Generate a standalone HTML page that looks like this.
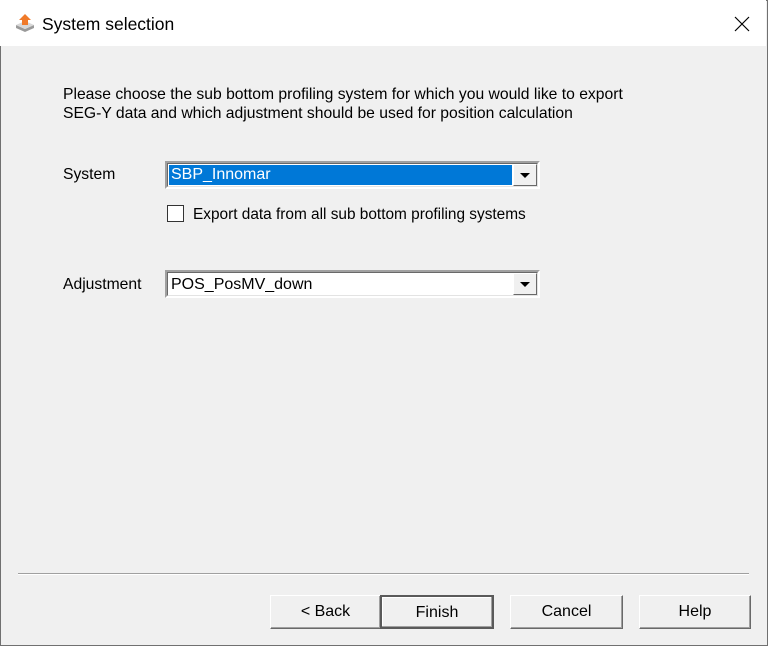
<!DOCTYPE html>
<html><head><style>
*{box-sizing:border-box;margin:0;padding:0}
body{width:768px;height:646px;background:#f0f0f0;font-family:"Liberation Sans",sans-serif;font-size:15.7px;color:#000;position:relative;overflow:hidden}
.win{position:absolute;left:0;top:0;width:768px;height:646px;border:1px solid #707070}
.title{position:absolute;left:0;top:0;width:766px;height:46px;background:#fff}
.t{position:absolute;white-space:nowrap}
.combo{position:absolute;left:165px;width:375px;height:28px;border:2px solid;border-color:#a0a0a0 #fff #fff #a0a0a0;background:#fff}
.combo .in{position:absolute;left:0;top:0;right:0;bottom:0;border:1px solid;border-color:#696969 #e3e3e3 #e3e3e3 #696969}
.dd{position:absolute;right:1px;top:1px;width:24px;height:22px;background:#f0f0f0;border:1px solid;border-color:#fff #696969 #696969 #fff}
.dd:after{content:"";position:absolute;left:6px;top:8px;border-left:5px solid transparent;border-right:5px solid transparent;border-top:5px solid #000}
.btn{position:absolute;top:595px;height:34px;border:1px solid;border-color:#fff #696969 #696969 #fff;box-shadow:inset -1px -1px 0 #a0a0a0;background:#f0f0f0;text-align:center;line-height:31px;font-size:16px}
</style></head><body>
<div class="win"></div>
<div class="title">
<svg style="position:absolute;left:14px;top:12px" width="22" height="22" viewBox="0 0 22 22">
<path d="M2 13 L11 17 L20 13 L20 16 L11 20 L2 16Z" fill="#9a9a9a"/>
<path d="M2 13 L11 9 L20 13 L11 17Z" fill="#d8d8d8"/>
<path d="M11 2 L17 8 L14 8 L14 13 L8 13 L8 8 L5 8Z" fill="#f07a2a"/>
</svg>
<div class="t" style="left:42px;top:14px;font-size:17.5px">System selection</div>
<svg style="position:absolute;left:734px;top:16px" width="16" height="16"><path d="M1 1L15 15M15 1L1 15" stroke="#000" stroke-width="1.2"/></svg>
</div>
<div class="t" style="left:63px;top:86px">Please choose the sub bottom profiling system for which you would like to export</div>
<div class="t" style="left:63px;top:105px">SEG-Y data and which adjustment should be used for position calculation</div>
<div class="t" style="left:63px;top:166px">System</div>
<div class="combo" style="top:161px"><div class="in"></div>
<div style="position:absolute;left:2px;top:2px;width:343px;height:20px;background:#0078d7;color:#fff;padding-left:2px;line-height:20px;font-size:16px">SBP_Innomar</div>
<div class="dd"></div></div>
<div style="position:absolute;left:167px;top:205px;width:17px;height:17px;background:#fff;border:1px solid #333"></div>
<div class="t" style="left:193px;top:206px;font-size:15.4px">Export data from all sub bottom profiling systems</div>
<div class="t" style="left:63px;top:276px">Adjustment</div>
<div class="combo" style="top:270px"><div class="in"></div>
<div style="position:absolute;left:4px;top:3px;line-height:20px;font-size:16px">POS_PosMV_down</div>
<div class="dd"></div></div>
<div style="position:absolute;left:18px;top:573px;width:731px;height:2px;border-top:1px solid #a0a0a0;border-bottom:1px solid #fff"></div>
<div class="btn" style="left:270px;width:111px">&lt; Back</div>
<div class="btn" style="left:380px;width:114px;border:2px solid #5a5a5a;box-shadow:inset -1px -1px 0 #a0a0a0,inset 1px 1px 0 #fff">Finish</div>
<div class="btn" style="left:510px;width:113px">Cancel</div>
<div class="btn" style="left:639px;width:112px">Help</div>
</body></html>
